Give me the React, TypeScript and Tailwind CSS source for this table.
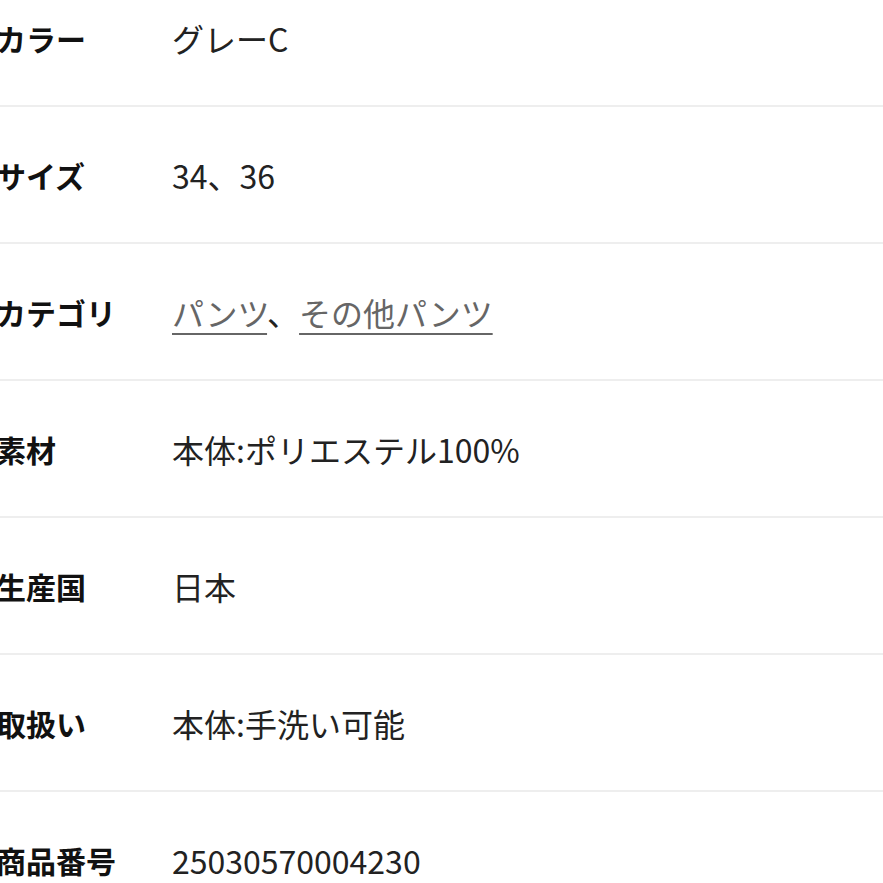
const rows: { label: string; value: React.ReactNode }[] = [
  { label: 'カラー', value: 'グレーC' },
  { label: 'サイズ', value: '34、36' },
  {
    label: 'カテゴリ',
    value: (
      <>
        <a href="#" className="text-[#666] underline decoration-2 underline-offset-[7px]">
          パンツ
        </a>
        、
        <a href="#" className="text-[#666] underline decoration-2 underline-offset-[7px]">
          その他パンツ
        </a>
      </>
    ),
  },
  { label: '素材', value: '本体:ポリエステル100%' },
  { label: '生産国', value: '日本' },
  { label: '取扱い', value: '本体:手洗い可能' },
  { label: '商品番号', value: '25030570004230' },
]

export default function App() {
  return (
    <div
      className="h-[883px] w-[883px] overflow-hidden bg-white text-[#222]"
      style={{ fontFamily: '"Noto Sans CJK JP", "Noto Sans", sans-serif' }}
    >
      <dl className="-mt-[30px] -ml-[4px]">
        {rows.map((r) => (
          <div
            key={r.label}
            className="flex items-center border-b-2 border-[#eeeeee] pt-[46px] pb-[44px] leading-[45px]"
          >
            <dt className="w-[176px] shrink-0 text-[30px] font-bold text-[#111]">{r.label}</dt>
            <dd className="text-[32px] font-normal">{r.value}</dd>
          </div>
        ))}
      </dl>
    </div>
  )
}
